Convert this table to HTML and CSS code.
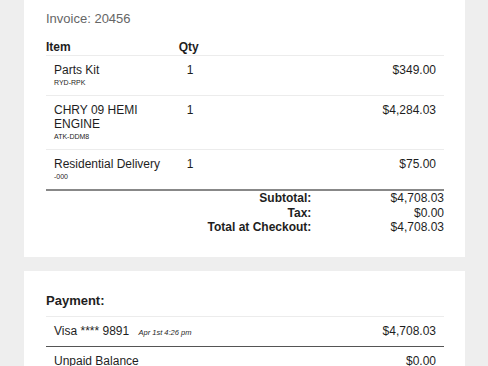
FILE: index.html
```html
<!DOCTYPE html>
<html lang="en">
<head>
<meta charset="utf-8">
<title>Invoice 20456</title>
<link rel="stylesheet" href="styles.css">
</head>
<body>
<main class="page">
  <section class="card invoice">
    <h1 class="invoice-title">Invoice: 20456</h1>
    <div class="items">
      <div class="row head">
        <div class="cell">Item</div>
        <div class="cell">Qty</div>
        <div class="cell"></div>
      </div>
      <div class="row item">
        <div class="cell"><div class="name">Parts Kit</div><div class="sku">RYD-RPK</div></div>
        <div class="cell">1</div>
        <div class="cell price">$349.00</div>
      </div>
      <div class="row item">
        <div class="cell"><div class="name">CHRY 09 HEMI ENGINE</div><div class="sku">ATK-DDM8</div></div>
        <div class="cell">1</div>
        <div class="cell price">$4,284.03</div>
      </div>
      <div class="row item last">
        <div class="cell"><div class="name">Residential Delivery</div><div class="sku">-000</div></div>
        <div class="cell">1</div>
        <div class="cell price">$75.00</div>
      </div>
    </div>
    <div class="totals">
      <div class="label">Subtotal:</div><div class="value">$4,708.03</div>
      <div class="label">Tax:</div><div class="value">$0.00</div>
      <div class="label">Total at Checkout:</div><div class="value">$4,708.03</div>
    </div>
  </section>
  <section class="card payment">
    <h2 class="payment-title">Payment:</h2>
    <div class="payments">
      <div class="pay-row first">
        <div class="pay-desc">Visa **** 9891 <span class="pay-date">Apr 1st 4:26 pm</span></div>
        <div class="pay-amount">$4,708.03</div>
      </div>
      <div class="pay-row">
        <div class="pay-desc">Unpaid Balance</div>
        <div class="pay-amount">$0.00</div>
      </div>
    </div>
  </section>
</main>
</body>
</html>
```

FILE: styles.css
```css
html, body {
  margin: 0;
  padding: 0;
}
body {
  background: #eeeeee;
  font-family: "Liberation Sans", Arial, Helvetica, sans-serif;
  color: #1e1e1e;
  font-size: 12px;
}
.page {
  display: flex;
  flex-direction: column;
  gap: 14px;
  padding: 0 23px 0 24px;
}
.card {
  background: #ffffff;
  padding: 11px 21px 22px 22px;
}
.invoice-title {
  margin: 0 0 14px;
  font-size: 13px;
  line-height: 15px;
  font-weight: normal;
  color: #666666;
}
.row {
  display: grid;
  grid-template-columns: repeat(3, 1fr);
}
.head {
  font-weight: bold;
  line-height: 14px;
  padding-bottom: 1px;
  border-bottom: 1px solid #ececec;
}
.item {
  border-bottom: 1px solid #ececec;
}
.item.last {
  border-bottom: 2px solid #888888;
}
.item .cell {
  padding: 7px 8px 7px;
  line-height: 14px;
}
.price {
  text-align: right;
}
.sku {
  font-size: 7px;
  line-height: 10px;
  padding-top: 1px;
}
.totals {
  display: grid;
  grid-template-columns: 2fr 1fr;
  line-height: 14.5px;
  margin-top: 0;
}
.totals .label {
  font-weight: bold;
  text-align: right;
}
.totals .value {
  text-align: right;
}
.payment {
  padding-top: 22px;
}
.payment-title {
  margin: 0 0 8px;
  font-size: 13px;
  line-height: 15px;
  font-weight: bold;
}
.payments {
  border-top: 1px solid #ececec;
}
.pay-row {
  display: flex;
  justify-content: space-between;
  align-items: baseline;
  padding: 7px 8px 8px;
  line-height: 14px;
}
.pay-row.first {
  border-bottom: 1px solid #555555;
}
.pay-date {
  font-size: 7.5px;
  line-height: 1;
  font-style: italic;
  margin-left: 6px;
}
```
